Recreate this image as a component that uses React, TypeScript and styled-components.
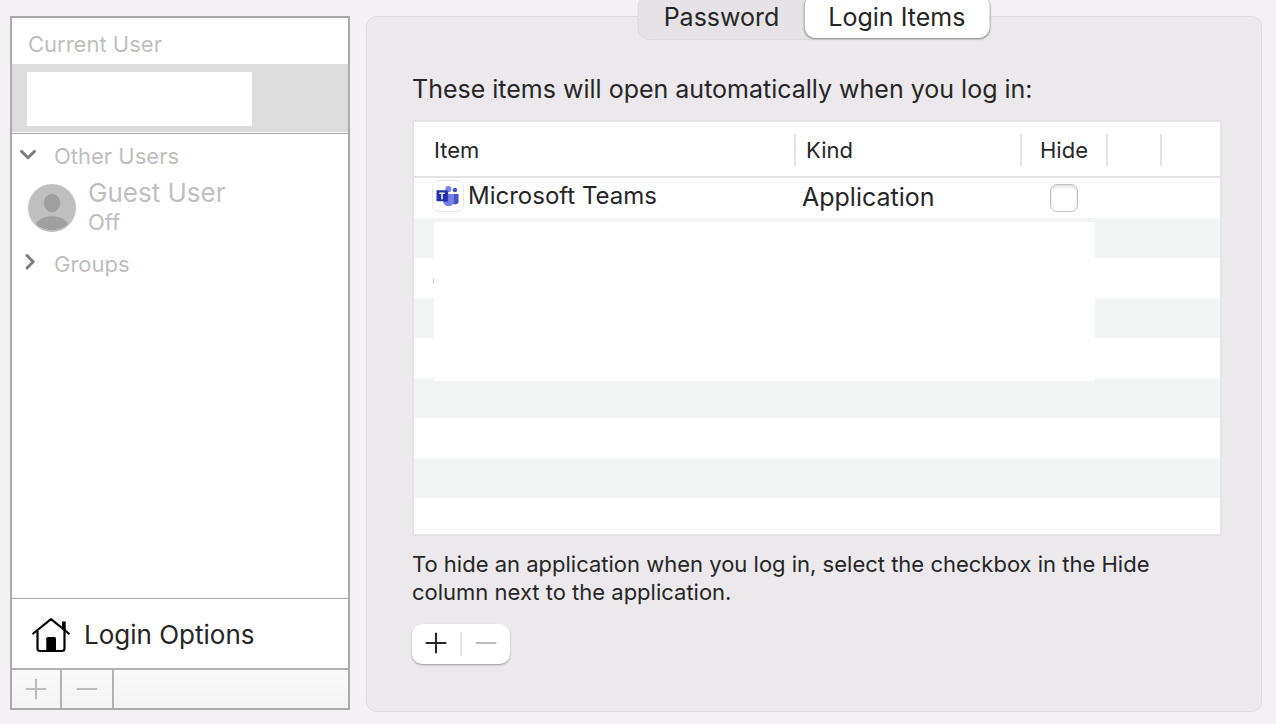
import React from "react";
import styled, { createGlobalStyle } from "styled-components";

const GlobalStyle = createGlobalStyle`
  * { box-sizing: border-box; }
  body {
    margin: 0;
    background: #f3f1f4;
    color: #262626;
    font-family: Inter, "Liberation Sans", sans-serif;
    -webkit-font-smoothing: antialiased;
  }
  button {
    margin: 0;
    padding: 0;
    border: 0;
    background: none;
    color: inherit;
    font: inherit;
    text-align: left;
  }
`;

const Page = styled.div`
  display: flex;
  gap: 16px;
  min-height: 100vh;
  padding: 16px 14px 12px 10px;
`;

const Sidebar = styled.aside`
  display: flex;
  flex: 0 0 340px;
  flex-direction: column;
  margin-bottom: 2px;
  border: 2px solid #aaaaaa;
  background: #ffffff;
`;

const SectionTitle = styled.h2`
  margin: 0;
  padding: 12px 16px 6px;
  color: #bfbfbf;
  font-size: 22px;
  font-weight: 400;
  line-height: 28px;
`;

const SelectedUser = styled.button`
  display: block;
  width: 100%;
  height: 68px;
  padding: 8px 15px;
  background: #dcdcdc;
`;

const HiddenName = styled.span`
  display: block;
  width: 225px;
  height: 54px;
  background: #ffffff;
`;

const UserList = styled.div`
  flex: 1;
  margin-top: 1px;
  padding-top: 8px;
  border-top: 1px solid #aaaaaa;
`;

const GroupToggle = styled.button`
  display: flex;
  align-items: center;
  gap: 18px;
  width: 100%;
  padding-left: 8px;
  color: #bfbfbf;
  font-size: 22px;
  line-height: 28px;
`;

const UserRow = styled.button`
  display: flex;
  align-items: center;
  gap: 12px;
  width: 100%;
  padding: 8px 16px 12px;
  color: #bfbfbf;
`;

const UserText = styled.span`
  display: flex;
  flex-direction: column;
  padding-bottom: 2px;
`;

const UserName = styled.span`
  font-size: 26px;
  line-height: 30px;
`;

const UserStatus = styled.span`
  font-size: 22px;
  line-height: 28px;
`;

const LoginOptions = styled.button`
  display: flex;
  align-items: center;
  gap: 14px;
  height: 70px;
  padding: 2px 20px 0;
  border-top: 1px solid #aaaaaa;
  font-size: 26px;
`;

const SidebarBar = styled.div`
  display: flex;
  height: 40px;
  border-top: 2px solid #b2b2b2;
  background: linear-gradient(#fafafa, #f3f3f3);
`;

const BarButton = styled.button<{ $width: number }>`
  display: flex;
  align-items: center;
  justify-content: center;
  width: ${(p) => p.$width}px;
  border-right: 2px solid #b2b2b2;
  color: #bcbcbc;
`;

const Panel = styled.main`
  position: relative;
  flex: 1;
  min-width: 0;
  padding: 56px 39px 0 45px;
  border: 1px solid #dfdddf;
  border-radius: 10px;
  background: #ebe9eb;
`;

const Tabs = styled.div`
  position: absolute;
  top: -23px;
  left: 50%;
  display: flex;
  padding-bottom: 1px;
  border: 1px solid #dcdadd;
  border-radius: 12px;
  background: #e5e3e6;
  transform: translateX(-50%);
`;

const Tab = styled.button<{ $active?: boolean }>`
  height: 43px;
  padding: 0 25px;
  border-radius: 11px;
  font-size: 25px;
  ${(p) =>
    p.$active &&
    `padding: 0 24px;
     background: #ffffff;
     box-shadow: 0 1px 2px rgba(0, 0, 0, 0.4);`}
`;

const Title = styled.h1`
  margin: 0 0 15px;
  font-size: 25px;
  font-weight: 400;
  line-height: 32px;
`;

const TableFrame = styled.div`
  position: relative;
  height: 416px;
  overflow: hidden;
  border: 2px solid #e4e4e4;
  background: #ffffff;
`;

const ItemTable = styled.table`
  width: 100%;
  border-collapse: separate;
  border-spacing: 0;
  table-layout: fixed;
`;

const HeadCell = styled.th<{ $width?: number; $center?: boolean; $inset?: number }>`
  width: ${(p) => (p.$width ? `${p.$width}px` : "auto")};
  height: 56px;
  padding: 2px 0 0;
  border-bottom: 2px solid #e4e4e4;
  font-size: 22px;
  font-weight: 400;
  text-align: ${(p) => (p.$center ? "center" : "left")};

  & > span {
    display: block;
    height: 32px;
    padding-left: ${(p) => p.$inset ?? 0}px;
    border-right: 2px solid #e4e4e4;
    line-height: 32px;
  }
`;

const BodyRow = styled.tr`
  height: 40px;
  &:nth-child(even) { background: #f3f5f5; }
`;

const Cell = styled.td<{ $inset?: number }>`
  height: 40px;
  padding: 0 0 0 ${(p) => p.$inset ?? 0}px;
  font-size: 25px;
  line-height: 38px;
  vertical-align: top;
`;

const ItemName = styled.div`
  display: flex;
  align-items: center;
  gap: 4px;
  height: 36px;
  font-size: 24px;
`;

const HideBox = styled.input`
  display: block;
  width: 28px;
  height: 28px;
  margin: 6px 0 0 28px;
  border: 1px solid #bfbfbf;
  border-radius: 7px;
  background: #ffffff;
  box-shadow: inset 0 2px 3px rgba(0, 0, 0, 0.12);
  appearance: none;
  &:checked { background: #0a7aff; }
`;

const Redaction = styled.div`
  position: absolute;
  top: 100px;
  right: 125px;
  left: 20px;
  height: 159px;
  background: #ffffff;

  &::before {
    position: absolute;
    top: 57px;
    left: -1px;
    width: 1px;
    height: 4px;
    background: #b4b4b4;
    content: "";
  }
`;

const Hint = styled.p`
  max-width: 770px;
  margin: 14px 0 18px;
  font-size: 22px;
  line-height: 28px;
`;

const Stepper = styled.div`
  display: inline-flex;
  align-items: center;
  height: 40px;
  border-radius: 10px;
  background: #ffffff;
  box-shadow: 0 1px 2px rgba(0, 0, 0, 0.35);
`;

const StepButton = styled.button<{ $muted?: boolean }>`
  display: flex;
  align-items: center;
  justify-content: center;
  width: 48px;
  height: 40px;
  padding-bottom: 2px;
  color: ${(p) => (p.$muted ? "#bcbcbc" : "#262626")};
`;

const StepDivider = styled.span`
  width: 2px;
  height: 24px;
  background: #e2e2e2;
`;

const PlusIcon = () => (
  <svg width="22" height="22" viewBox="0 0 22 22" stroke="currentColor" strokeWidth="2.100" strokeLinecap="round" aria-hidden>
    <path d="M1.500 11h19M11 1.500v19" />
  </svg>
);

const MinusIcon = () => (
  <svg width="22" height="22" viewBox="0 0 22 22" stroke="currentColor" strokeWidth="2.100" strokeLinecap="round" aria-hidden>
    <path d="M1.500 11h19" />
  </svg>
);

const Chevron = ({ open }: { open?: boolean }) => (
  <svg width="16" height="20" viewBox="0 0 16 20" fill="none" stroke="#7d7d7d" strokeWidth="2.9" strokeLinecap="round" strokeLinejoin="round" aria-hidden>
    <path d={open ? "M1.5 5.400 8 11.800l6.500-6.400" : "M7 1.500 13.200 7.800 7 14"} />
  </svg>
);

const Avatar = () => (
  <svg width="48" height="48" viewBox="0 0 48 48" aria-hidden>
    <circle cx="24" cy="24" r="24" fill="#bfbfbf" />
    <ellipse cx="24" cy="19" rx="8.2" ry="9.2" fill="#9f9f9f" />
    <path d="M8 39.5C11.5 34.500 17 32.300 24 32.300s12.500 2.200 16 7.200C36.500 43.700 30.500 46 24 46S11.500 43.700 8 39.500Z" fill="#9f9f9f" />
  </svg>
);

const HouseIcon = () => (
  <svg width="38" height="36" viewBox="0 0 38 36" fill="none" stroke="#000000" aria-hidden>
    <path d="M1.200 16.500 19 2.200 36.800 16.500" strokeWidth="2.200" strokeLinecap="round" strokeLinejoin="round" />
    <path d="M5.500 14v17.500a2.500 2.500 0 0 0 2.500 2.500h22a2.500 2.500 0 0 0 2.500-2.500V12" strokeWidth="2.200" />
    <path d="M14.300 21.500a1.500 1.500 0 0 1 1.500-1.500h6.700a1.500 1.500 0 0 1 1.500 1.500V34h-9.700Z" fill="#000000" stroke="none" />
    <path d="M30 4.500h3.700V15L30 12Z" fill="#000000" stroke="none" />
  </svg>
);

const TeamsIcon = () => (
  <svg width="32" height="32" viewBox="0 0 32 32" aria-hidden>
    <rect x="0.500" y="0.500" width="31" height="31" rx="7" fill="#ffffff" stroke="#e6e6e6" />
    <circle cx="22.900" cy="10" r="2.200" fill="#4450c8" />
    <path d="M20 14h6.500v6.300a3.300 3.300 0 0 1-6.500 1.500Z" fill="#4652c8" />
    <circle cx="16.400" cy="9" r="3.100" fill="#7b83eb" />
    <path d="M11 14h11v6.800a5.500 5.500 0 0 1-11 0Z" fill="#7880e6" />
    <path d="M12 11h4.200v11H12Z" fill="#4650b4" />
    <rect x="4.500" y="10.300" width="11" height="11" rx="0.500" fill="#2231ae" />
    <path d="M7.300 13.300h5.400M10 13.300v5.900" stroke="#ffffff" strokeWidth="1.500" />
  </svg>
);

const EMPTY_ROWS = [1, 2, 3, 4, 5, 6, 7, 8];

export default function App() {
  return (
    <>
      <GlobalStyle />
      <Page>
        <Sidebar>
          <SectionTitle>Current User</SectionTitle>
          <SelectedUser type="button" aria-label="Current user">
            <HiddenName />
          </SelectedUser>
          <UserList>
            <GroupToggle type="button" aria-expanded="true">
              <Chevron open />
              Other Users
            </GroupToggle>
            <UserRow type="button">
              <Avatar />
              <UserText>
                <UserName>Guest User</UserName>
                <UserStatus>Off</UserStatus>
              </UserText>
            </UserRow>
            <GroupToggle type="button" aria-expanded="false">
              <Chevron />
              Groups
            </GroupToggle>
          </UserList>
          <LoginOptions type="button">
            <HouseIcon />
            Login Options
          </LoginOptions>
          <SidebarBar>
            <BarButton type="button" $width={50} aria-label="Add user">
              <PlusIcon />
            </BarButton>
            <BarButton type="button" $width={52} aria-label="Remove user">
              <MinusIcon />
            </BarButton>
          </SidebarBar>
        </Sidebar>

        <Panel>
          <Tabs role="tablist">
            <Tab type="button" role="tab" aria-selected="false">Password</Tab>
            <Tab type="button" role="tab" aria-selected="true" $active>Login Items</Tab>
          </Tabs>
          <Title>These items will open automatically when you log in:</Title>
          <TableFrame>
            <ItemTable>
              <thead>
                <tr>
                  <HeadCell $inset={20}><span>Item</span></HeadCell>
                  <HeadCell $width={226} $inset={10}><span>Kind</span></HeadCell>
                  <HeadCell $width={86} $center><span>Hide</span></HeadCell>
                  <HeadCell $width={54}><span /></HeadCell>
                  <HeadCell $width={58} />
                </tr>
              </thead>
              <tbody>
                <BodyRow>
                  <Cell $inset={18}>
                    <ItemName>
                      <TeamsIcon />
                      Microsoft Teams
                    </ItemName>
                  </Cell>
                  <Cell $inset={6}>Application</Cell>
                  <Cell>
                    <HideBox type="checkbox" aria-label="Hide Microsoft Teams" />
                  </Cell>
                  <Cell />
                  <Cell />
                </BodyRow>
                {EMPTY_ROWS.map((row) => (
                  <BodyRow key={row}>
                    <Cell colSpan={5} />
                  </BodyRow>
                ))}
              </tbody>
            </ItemTable>
            <Redaction />
          </TableFrame>
          <Hint>
            To hide an application when you log in, select the checkbox in the Hide column next to the application.
          </Hint>
          <Stepper>
            <StepButton type="button" aria-label="Add login item">
              <PlusIcon />
            </StepButton>
            <StepDivider />
            <StepButton type="button" $muted aria-label="Remove login item">
              <MinusIcon />
            </StepButton>
          </Stepper>
        </Panel>
      </Page>
    </>
  );
}
